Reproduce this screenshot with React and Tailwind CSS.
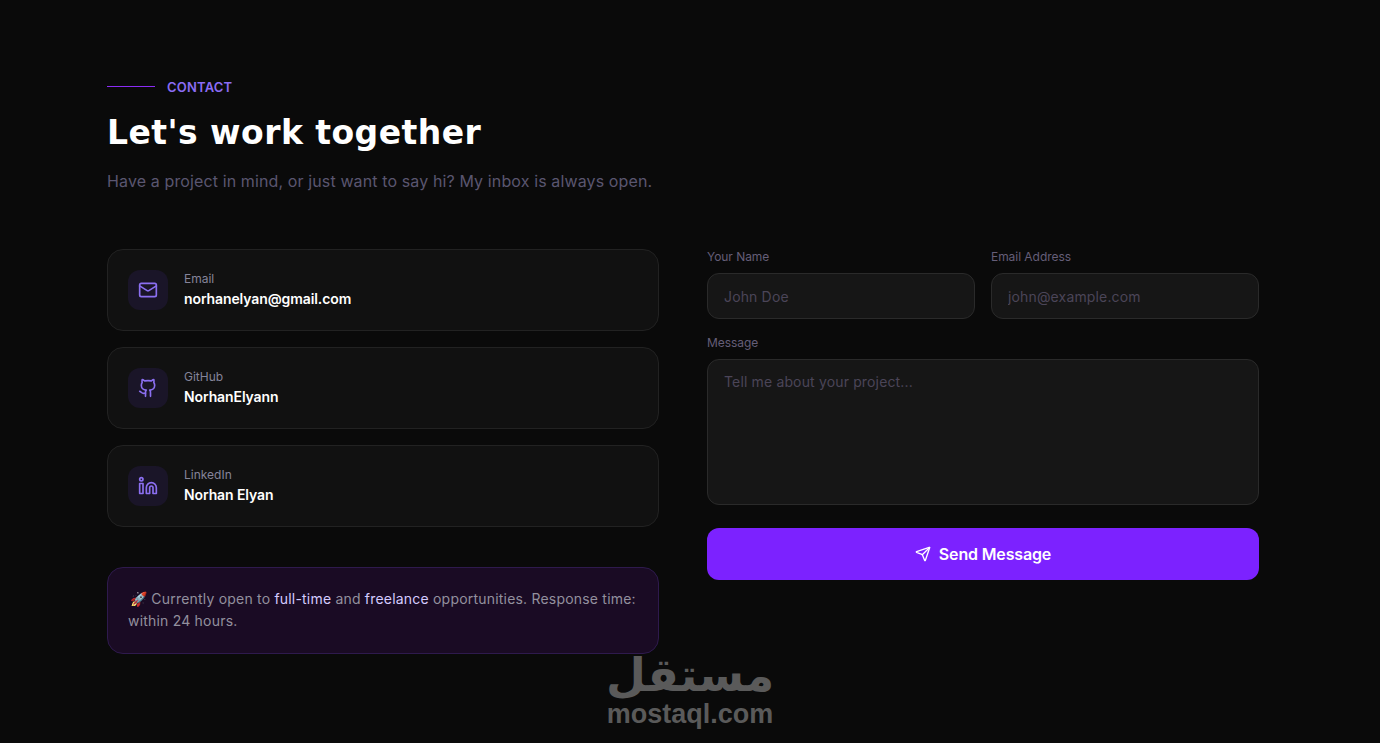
import React from "react";
import { Mail, Github, Linkedin, Send } from "lucide-react";

const contacts = [
  { label: "Email", value: "norhanelyan@gmail.com", Icon: Mail },
  { label: "GitHub", value: "NorhanElyann", Icon: Github },
  { label: "LinkedIn", value: "Norhan Elyan", Icon: Linkedin },
];

const inputClass =
  "w-full h-[46px] px-4 bg-[#161616] border border-[#2a2a2a] rounded-xl text-sm tracking-[0.15px] text-white placeholder:text-[#4b4558] outline-none";

const labelClass = "block mb-2 text-xs leading-4 text-[#655e78] tracking-[-0.05px]";

const ContactCard = ({ label, value, Icon }) => (
  <div className="flex items-center gap-4 h-[82px] px-5 bg-[#111111] border border-[#222222] rounded-2xl">
    <div className="w-10 h-10 flex items-center justify-center rounded-xl bg-[#1a1528] text-[#8b6ff0]">
      <Icon size={20} strokeWidth={2} />
    </div>
    <div>
      <p className="text-xs leading-4 mb-0.5 text-[#85849a]">{label}</p>
      <p className="text-sm leading-5 font-semibold text-white tracking-[-0.1px]">{value}</p>
    </div>
  </div>
);

export default function App() {
  return (
    <div className="relative w-full h-[743px] overflow-hidden bg-[#0a0a0a] font-['Inter',sans-serif]">
      <div className="w-[1366px]">
        <section className="max-w-6xl mx-auto pt-[78px]">
          <div className="flex items-center gap-3 h-[17px]">
            <span className="w-12 h-px bg-[#8b2cf5]" />
            <span className="text-[13px] leading-4 font-semibold tracking-[0.2px] text-[#8b6cf5]">CONTACT</span>
          </div>
          <h2 className="mt-[18px] text-[33px] leading-10 font-bold text-white tracking-[0.45px] font-['DejaVu_Sans',sans-serif]">
            Let's work together
          </h2>
          <p className="mt-4 text-base leading-6 text-[#5a5670] tracking-[0.12px]">
            Have a project in mind, or just want to say hi? My inbox is always open.
          </p>

          <div className="grid grid-cols-2 gap-12 mt-14">
            <div>
              <div className="flex flex-col gap-4">
                {contacts.map((c) => (
                  <ContactCard key={c.label} {...c} />
                ))}
              </div>
              <div className="mt-10 px-5 py-5 h-[87px] bg-[#1a0b24] border border-[#2e1a4d] rounded-2xl text-sm leading-[22px] text-[#93909e] tracking-[0.2px]">
                <span className="ml-0.5">🚀</span> Currently open to <span className="text-[#d5ccff]">full-time</span> and{" "}
                <span className="text-[#d5ccff]">freelance</span> opportunities. Response time: within 24 hours.
              </div>
            </div>

            <form className="flex flex-col">
              <div className="grid grid-cols-2 gap-4">
                <div>
                  <label className={labelClass}>Your Name</label>
                  <input className={inputClass} placeholder="John Doe" />
                </div>
                <div>
                  <label className={labelClass}>Email Address</label>
                  <input className={inputClass} placeholder="john@example.com" />
                </div>
              </div>
              <label className={`${labelClass} mt-4`}>Message</label>
              <textarea
                className="w-full h-[146px] px-4 py-3 block resize-none bg-[#161616] border border-[#2a2a2a] rounded-xl text-sm tracking-[0.15px] text-white placeholder:text-[#4b4558] outline-none"
                placeholder="Tell me about your project..."
              />
              <button
                type="button"
                className="mt-[23px] h-[52px] flex items-center justify-center gap-2 rounded-xl bg-[#7c22ff] text-white text-base font-semibold tracking-[-0.15px]"
              >
                <Send size={16} />
                Send Message
              </button>
            </form>
          </div>
        </section>
      </div>

      {/* watermark sits over the page */}
      <div className="absolute left-[590px] top-[648px] w-[200px] flex flex-col items-center text-[#5a5a5a] font-bold">
        <span dir="rtl" className="text-[46px] leading-[54px] font-['DejaVu_Sans',sans-serif]">مستقل</span>
        <span className="text-[27px] leading-6 font-['Liberation_Sans',sans-serif]">mostaql.com</span>
      </div>
    </div>
  );
}
